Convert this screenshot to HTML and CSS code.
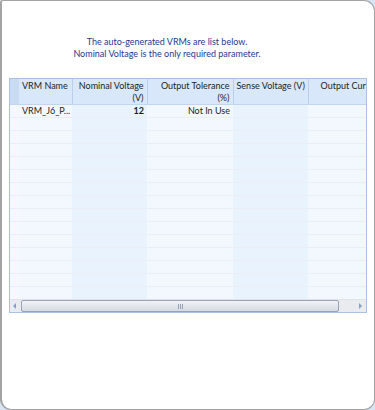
FILE: index.html
```html
<!DOCTYPE html>
<html lang="en">
<head>
    <meta charset="UTF-8">
    <meta name="viewport" content="width=device-width, initial-scale=1.0">
    <title>VRM List</title>
    <link rel="stylesheet" href="styles.css">
</head>
<body>
    <div class="window">
        <div class="message">
            <p>The auto-generated VRMs are list below.</p>
            <p>Nominal Voltage is the only required parameter.</p>
        </div>

        <div class="grid">
            <div class="grid-view">
                <table>
                    <colgroup>
                        <col class="c-row">
                        <col class="c-name">
                        <col class="c-nominal">
                        <col class="c-tol">
                        <col class="c-sense">
                        <col class="c-current">
                    </colgroup>
                    <thead>
                        <tr>
                            <th class="row-head"></th>
                            <th class="left">VRM Name</th>
                            <th class="right">Nominal Voltage<br>(V)</th>
                            <th class="right">Output Tolerance<br>(%)</th>
                            <th class="left">Sense Voltage (V)</th>
                            <th class="right clip">Output Cur</th>
                        </tr>
                    </thead>
                    <tbody>
                        <tr>
                            <td class="row-head"></td>
                            <td>VRM_J6_P...</td>
                            <td class="shade right bold">12</td>
                            <td class="right">Not In Use</td>
                            <td class="shade"></td>
                            <td></td>
                        </tr>
                        <tr><td class="row-head"></td><td></td><td class="shade"></td><td></td><td class="shade"></td><td></td></tr>
                        <tr><td class="row-head"></td><td></td><td class="shade"></td><td></td><td class="shade"></td><td></td></tr>
                        <tr><td class="row-head"></td><td></td><td class="shade"></td><td></td><td class="shade"></td><td></td></tr>
                        <tr><td class="row-head"></td><td></td><td class="shade"></td><td></td><td class="shade"></td><td></td></tr>
                        <tr><td class="row-head"></td><td></td><td class="shade"></td><td></td><td class="shade"></td><td></td></tr>
                        <tr><td class="row-head"></td><td></td><td class="shade"></td><td></td><td class="shade"></td><td></td></tr>
                        <tr><td class="row-head"></td><td></td><td class="shade"></td><td></td><td class="shade"></td><td></td></tr>
                        <tr><td class="row-head"></td><td></td><td class="shade"></td><td></td><td class="shade"></td><td></td></tr>
                        <tr><td class="row-head"></td><td></td><td class="shade"></td><td></td><td class="shade"></td><td></td></tr>
                        <tr><td class="row-head"></td><td></td><td class="shade"></td><td></td><td class="shade"></td><td></td></tr>
                        <tr><td class="row-head"></td><td></td><td class="shade"></td><td></td><td class="shade"></td><td></td></tr>
                        <tr><td class="row-head"></td><td></td><td class="shade"></td><td></td><td class="shade"></td><td></td></tr>
                        <tr><td class="row-head"></td><td></td><td class="shade"></td><td></td><td class="shade"></td><td></td></tr>
                        <tr><td class="row-head"></td><td></td><td class="shade"></td><td></td><td class="shade"></td><td></td></tr>
                        <tr><td class="row-head"></td><td></td><td class="shade"></td><td></td><td class="shade"></td><td></td></tr>
                    </tbody>
                </table>
            </div>
            <div class="hscroll">
                <span class="arrow arrow-left"></span>
                <div class="track">
                    <div class="thumb"><span class="grip"></span></div>
                </div>
                <span class="arrow arrow-right"></span>
            </div>
        </div>
    </div>
</body>
</html>
```

FILE: styles.css
```css
body {
    margin: 0;
    padding: 0;
    background-color: #d9e4f3;
    font-family: Lato, "Liberation Sans", sans-serif;
}

.window {
    box-sizing: border-box;
    width: 375px;
    height: 410px;
    background-color: #fff;
    border: 1px solid #a3a3a3;
    border-left-width: 2px;
    border-radius: 3px 11px 11px 11px;
    padding-top: 35px;
}

.message {
    width: 330px;
    text-align: center;
    color: #1d3a8f;
    font-size: 9px;
    line-height: 11.5px;
}

.message p {
    margin: 0;
}

.grid {
    box-sizing: border-box;
    width: 358px;
    height: 235px;
    margin: 19px 0 0 7px;
    border: 1px solid #a9c1e3;
    display: flex;
    flex-direction: column;
    background-color: #f3f8fe;
}

.grid-view {
    flex: 1;
    overflow: hidden;
}

table {
    table-layout: fixed;
    border-collapse: collapse;
    width: 420px;
    font-size: 9px;
    color: #1e1e1e;
}

.c-row { width: 9px; }
.c-name { width: 53px; }
.c-nominal { width: 75px; }
.c-tol { width: 86px; }
.c-sense { width: 75px; }
.c-current { width: 122px; }

th {
    height: 23px;
    padding: 1px 3px 0 3px;
    vertical-align: top;
    font-weight: normal;
    line-height: 12px;
    background-color: #d8e7f9;
    border-right: 1px solid #bccfe8;
    border-bottom: 1px solid #c2d5ee;
    white-space: nowrap;
    overflow: hidden;
}

th.row-head {
    background-color: #c9dbf2;
    border-right: none;
}

th.clip {
    text-align: left;
    padding-left: 12px;
}

td {
    height: 12px;
    padding: 0 3px;
    line-height: 12px;
    border-bottom: 1px solid #ebeff5;
    white-space: nowrap;
    overflow: hidden;
}

td.shade {
    background-color: #e8f3fe;
}

td.row-head {
    background-color: #f5f9ff;
}

.left { text-align: left; }
.right { text-align: right; }
.bold { font-weight: bold; }

.hscroll {
    height: 12px;
    display: flex;
    align-items: stretch;
    background-color: #e9ebef;
    border-top: 1px solid #e0e4ea;
}

.arrow {
    width: 11px;
    position: relative;
}

.arrow::after {
    content: "";
    position: absolute;
    top: 3px;
    border-top: 3px solid transparent;
    border-bottom: 3px solid transparent;
}

.arrow-left::after {
    left: 3px;
    border-right: 3px solid #8d9cc2;
}

.arrow-right::after {
    left: 4px;
    border-left: 3px solid #8d9cc2;
}

.track {
    flex: 1;
    padding-right: 16px;
}

.thumb {
    box-sizing: border-box;
    height: 12px;
    border: 1px solid #9aa3b3;
    border-radius: 2px;
    background: linear-gradient(#f2f4f7, #e2e5eb 50%, #d6dae2);
    display: flex;
    justify-content: center;
    align-items: center;
}

.grip {
    width: 5px;
    height: 5px;
    background: repeating-linear-gradient(90deg, #98a2b4 0 1px, transparent 1px 2px);
}
```
